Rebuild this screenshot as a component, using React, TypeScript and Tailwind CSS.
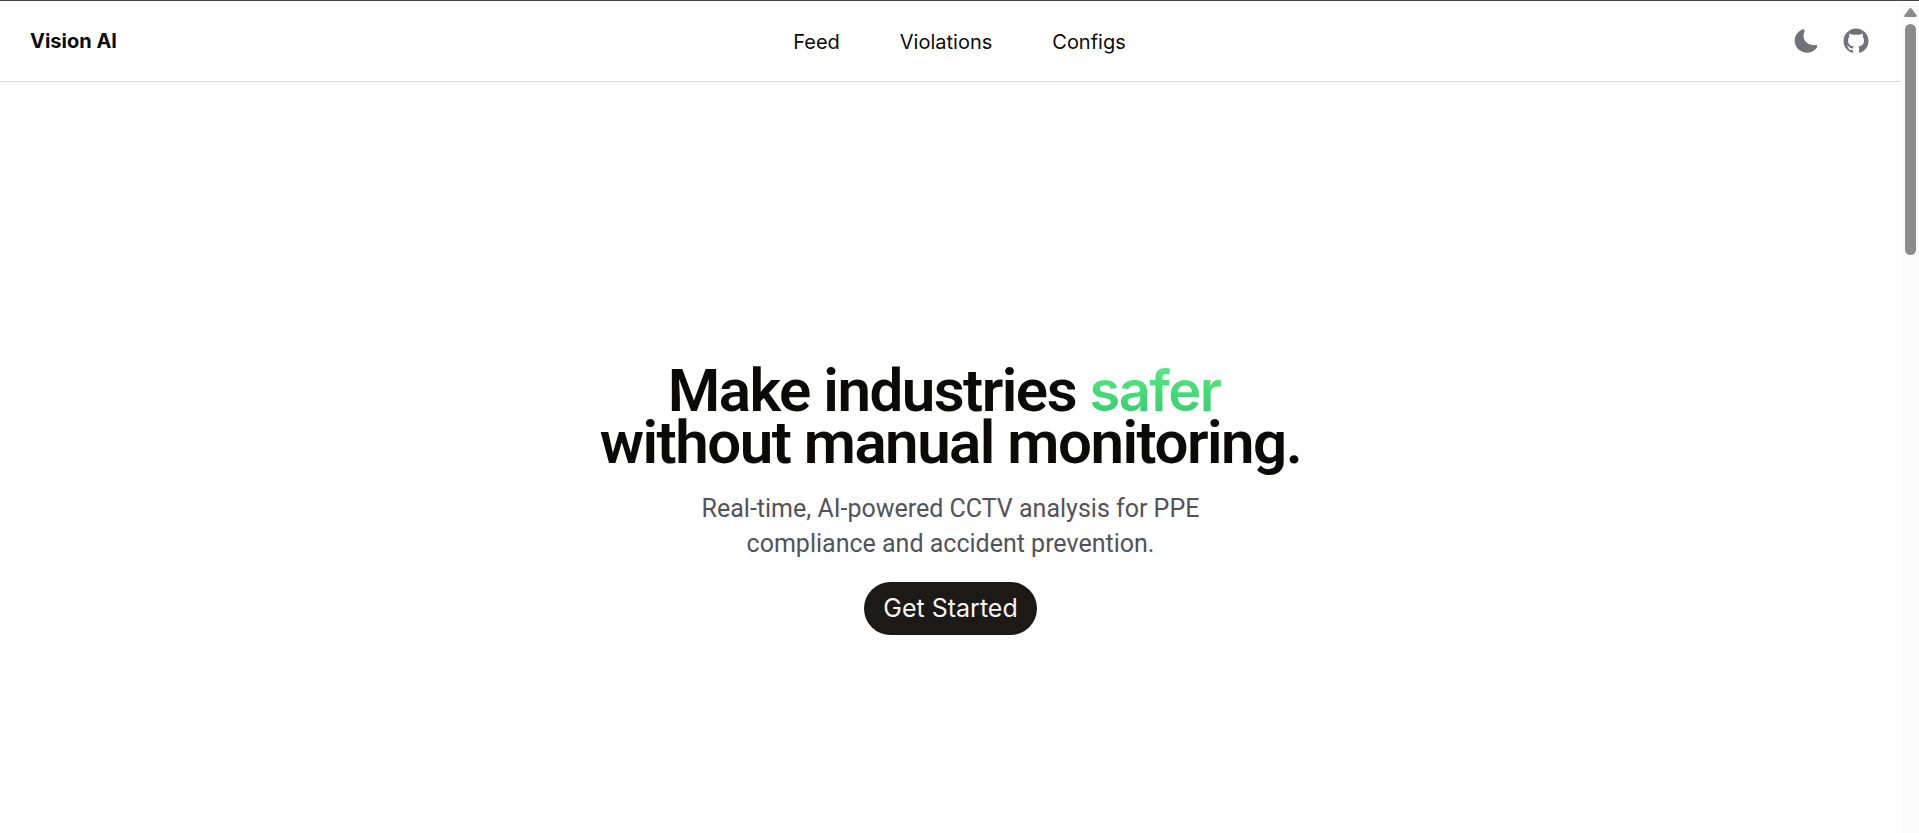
import React from "react";

const links = ["Feed", "Violations", "Configs"];

function MoonIcon() {
  return (
    <svg viewBox="0 0 24 24" className="size-7" fill="currentColor" aria-hidden="true">
      <path d="M21.53 15.93c-.16-.27-.61-.69-1.73-.49a8.46 8.46 0 01-1.88.13 8.409 8.409 0 01-5.91-2.82 8.068 8.068 0 01-1.44-8.66c.44-1.01.13-1.54-.09-1.76s-.77-.55-1.83-.11a10.318 10.318 0 00-6.32 10.21 10.475 10.475 0 007.04 8.99 10 10 0 002.89.55c.16.01.32.02.48.02a10.5 10.5 0 008.47-4.27c.67-.93.49-1.519.32-1.79z" />
    </svg>
  );
}

function GithubIcon() {
  return (
    <svg viewBox="0 0 24 24" className="size-[30px]" fill="currentColor" aria-hidden="true">
      <path
        fillRule="evenodd"
        clipRule="evenodd"
        d="M12.026 2c-5.509 0-9.974 4.465-9.974 9.974 0 4.406 2.857 8.145 6.821 9.465.499.09.679-.217.679-.481 0-.237-.008-.865-.011-1.696-2.775.602-3.361-1.338-3.361-1.338-.452-1.152-1.107-1.459-1.107-1.459-.905-.619.069-.605.069-.605 1.002.07 1.527 1.028 1.527 1.028.89 1.524 2.336 1.084 2.902.829.091-.645.351-1.085.635-1.334-2.214-.251-4.542-1.107-4.542-4.93 0-1.087.389-1.979 1.024-2.675-.101-.253-.446-1.268.099-2.64 0 0 .837-.269 2.742 1.021a9.582 9.582 0 0 1 2.496-.336 9.554 9.554 0 0 1 2.496.336c1.906-1.291 2.742-1.021 2.742-1.021.545 1.372.203 2.387.099 2.64.64.696 1.024 1.587 1.024 2.675 0 3.833-2.33 4.675-4.552 4.922.355.308.675.916.675 1.846 0 1.334-.012 2.41-.012 2.737 0 .267.178.577.687.479C19.146 20.115 22 16.379 22 11.974 22 6.465 17.535 2 12.026 2z"
      />
    </svg>
  );
}

function Header() {
  return (
    <header className="flex h-[81px] items-center justify-between border-b border-[#d9d9db] px-[30px] font-['Inter',sans-serif] text-xl text-[#0c0a09]">
      <a href="#home" className="pr-2.5 font-bold">
        Vision AI
      </a>
      <nav className="flex gap-[60px] pt-0.5">
        {links.map((label) => (
          <a key={label} href={"#" + label.toLowerCase()}>
            {label}
          </a>
        ))}
      </nav>
      <div className="flex items-center gap-[21px] text-[#71717a]">
        <button type="button" aria-label="Switch to dark mode">
          <MoonIcon />
        </button>
        <a href="#github" aria-label="Github">
          <GithubIcon />
        </a>
      </div>
    </header>
  );
}

function Hero() {
  return (
    <main className="flex grow flex-col items-center justify-center px-6 pt-[84px] text-center font-['Roboto',sans-serif]">
      <h1 className="text-6xl/[51px] font-semibold tracking-tight text-[#0c0a09]">
        Make industries{" "}
        <span className="bg-linear-to-b from-[#5fec8b] to-[#31c76a] bg-clip-text font-['Inter',sans-serif] text-[56px] text-transparent">
          safer&nbsp;
        </span>
        <br />
        without manual monitoring.
      </h1>
      <p className="mt-[23px] text-[25px]/[35px] text-[#52525b]">
        Real-time, AI-powered CCTV analysis for PPE
        <br />
        compliance and accident prevention.
      </p>
      <button
        type="button"
        className="mt-[21px] h-[53px] rounded-full bg-[#1c1917] px-[19px] pt-0.5 font-['Inter',sans-serif] text-[25px] text-[#f5f5f4]"
      >
        Get Started
      </button>
    </main>
  );
}

function ScrollTrack() {
  return (
    <div className="flex w-[18px] shrink-0 flex-col items-center bg-[#fcfcfc] pt-[7px]" aria-hidden="true">
      <svg viewBox="0 0 12 9" className="h-[9px] w-[13px]" preserveAspectRatio="none" fill="#8b8b8b">
        <path d="M4.9.7a1.4 1.4 0 0 1 2.2 0l4.5 6.6A1.1 1.1 0 0 1 10.7 9H1.3a1.1 1.1 0 0 1-.9-1.7z" />
      </svg>
      <div className="mt-[7px] h-[231px] w-[11px] rounded-full bg-[#8b8b8b]" />
    </div>
  );
}

export default function App() {
  return (
    <div className="flex min-h-screen border-t border-[#454545] bg-white">
      <div className="flex min-w-0 grow flex-col">
        <Header />
        <Hero />
      </div>
      <ScrollTrack />
    </div>
  );
}
